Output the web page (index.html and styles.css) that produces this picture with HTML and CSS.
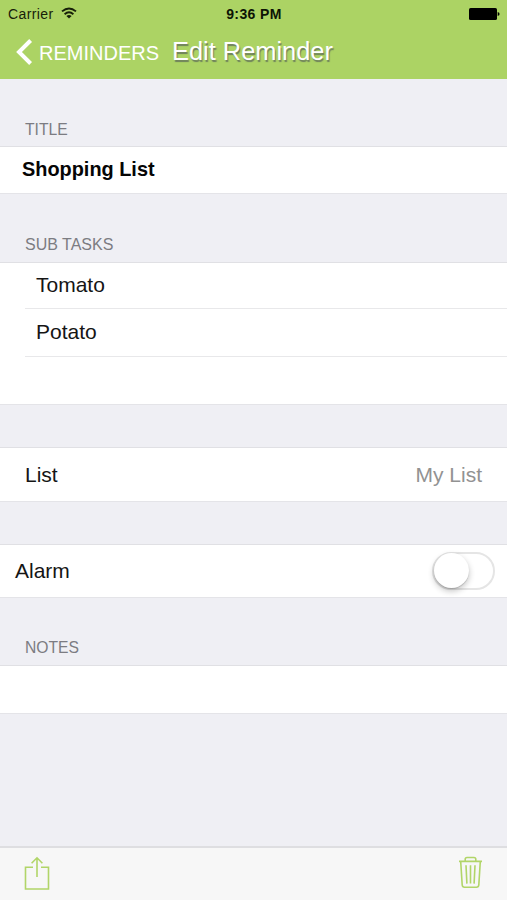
FILE: index.html
```html
<!DOCTYPE html>
<html lang="en">
<head>
<meta charset="utf-8">
<title>Edit Reminder</title>
<link rel="stylesheet" href="styles.css">
</head>
<body>
<div class="screen">
  <header class="header">
    <div class="status">
      <div class="carrier">
        <span>Carrier</span>
        <svg class="wifi" width="16" height="12" viewBox="0 0 16 12" fill="none" stroke="#172009" stroke-width="1.9"><path d="M1 4.4Q8-1.6 15 4.4M3.6 7.2Q8 3.5 12.4 7.2"/><path d="M5.4 8.9Q8 6.9 10.6 8.9L8 11.5Z" fill="#172009" stroke="none"/></svg>
      </div>
      <span class="time">9:36 PM</span>
      <svg class="battery" width="31" height="12" viewBox="0 0 31 12"><rect width="28" height="12" rx="1.6"/><path d="M28.7 4Q30.6 4.3 30.6 6T28.7 8Z"/></svg>
    </div>
    <nav class="nav">
      <a class="back">
        <svg width="17" height="26" viewBox="0 0 17 26" fill="none" stroke="#fff" stroke-width="4"><path d="M14.6 1.5 3 13 14.6 24.5"/></svg>
        <span class="back-label">REMINDERS</span>
      </a>
      <h1 class="title">Edit Reminder</h1>
    </nav>
  </header>
  <main class="form">
    <h2 class="label label-title">TITLE</h2>
    <div class="group row row-title">Shopping List</div>
    <h2 class="label label-tasks">SUB TASKS</h2>
    <div class="group tasks">
      <div class="task">Tomato</div>
      <div class="task">Potato</div>
      <div class="task"></div>
    </div>
    <div class="group row row-list"><span>List</span><span class="value">My List</span></div>
    <div class="group row row-alarm"><span>Alarm</span><span class="switch"><span class="knob"></span></span></div>
    <h2 class="label label-notes">NOTES</h2>
    <div class="group row-notes"></div>
  </main>
  <footer class="toolbar">
    <svg width="26" height="35" viewBox="0 0 26 35" fill="none" stroke="#b1d568" stroke-width="1.6"><path d="M9 11.2H1.5V33H24.5V11.2H17M13 21V2M7.6 7.2 13 1.8 18.4 7.2"/></svg>
    <svg width="25" height="33" viewBox="0 0 25 33" fill="none" stroke="#b1d568" stroke-width="1.6"><path d="M1 5.4H24M7.2 5V3.3Q7.2 1.5 9 1.5H16Q17.8 1.5 17.8 3.3V5M2.7 5.5 4.2 29Q4.4 31.2 6.5 31.2H18.5Q20.6 31.2 20.8 29L22.3 5.5M8 9.2 8.9 27.6M12.5 9.2V27.6M17 9.2 16.1 27.6"/></svg>
  </footer>
</div>
</body>
</html>
```
FILE: styles.css
```css
* { box-sizing: border-box; }
body {
  margin: 0;
  font-family: "Liberation Sans", Arial, sans-serif;
  color: #151515;
}
.screen {
  width: 507px;
  height: 900px;
  display: flex;
  flex-direction: column;
  background: #efeff4;
  overflow: hidden;
}
.header {
  height: 79px;
  flex: none;
  background: #acd364;
}
.status {
  height: 28px;
  padding: 0 7px 0 8px;
  display: grid;
  grid-template-columns: 1fr auto 1fr;
  align-items: center;
  font-size: 14px;
  line-height: 28px;
  color: #172009;
}
.carrier { display: flex; align-items: center; gap: 7px; letter-spacing: .4px; }
.wifi { margin-top: -3px; }
.time { font-weight: bold; font-size: 14px; letter-spacing: .4px; color: #0d1405; }
.battery { justify-self: end; fill: #000; margin-top: -1px; }
.nav {
  display: flex;
  align-items: center;
  height: 48px;
  padding-left: 16px;
  color: #fff;
}
.back { display: flex; align-items: center; }
.back-label { margin-left: 6px; width: 133px; font-size: 20px; line-height: 24px; padding-top: 1px; }
.title {
  margin: -2px 0 0;
  font-size: 25.4px;
  font-weight: normal;
  text-shadow: 1px 1.5px 1px rgba(90, 100, 90, .75);
}
.form { flex: 1; font-size: 21px; }
.label {
  margin: 0;
  padding-left: 25px;
  font-size: 16px;
  line-height: 18px;
  font-weight: normal;
  color: #7c7c82;
}
.label-title { padding-top: 42px; height: 67px; font-size: 15.7px; }
.label-tasks { padding-top: 42px; height: 68px; }
.label-notes { padding-top: 41px; height: 67px; font-size: 15.7px; }
.group {
  background: #fff;
  border-top: 1px solid #e0e0e4;
  border-bottom: 1px solid #e4e4e8;
}
.row { display: flex; align-items: center; justify-content: space-between; }
.row-title {
  height: 48px;
  padding: 0 22px 2px;
  font-size: 19.9px;
  font-weight: bold;
  color: #050505;
}
.tasks { height: 143px; padding-left: 25px; }
.task {
  height: 48px;
  padding-left: 11px;
  line-height: 45px;
  border-bottom: 1px solid #e8e8ea;
}
.task:first-child { height: 46px; line-height: 44px; }
.task:last-child { height: 47px; border-bottom: 0; }
.row-list { height: 55px; margin-top: 42px; padding: 1px 25px 0; }
.value { color: #929292; }
.row-alarm { height: 54px; margin-top: 42px; padding: 0 12px 0 15px; }
.switch {
  width: 63px;
  height: 38px;
  border: 2px solid #e5e5e5;
  border-radius: 19px;
  margin-top: -1px;
}
.knob {
  display: block;
  width: 35px;
  height: 35px;
  margin: -1px 0 0 0;
  border-radius: 50%;
  background: #fff;
  box-shadow: 0 3px 6px rgba(0, 0, 0, .24), 0 1px 1px rgba(0, 0, 0, .15);
}
.row-notes { height: 49px; }
.toolbar {
  height: 54px;
  flex: none;
  display: flex;
  justify-content: space-between;
  align-items: flex-start;
  padding: 8px 24px 0;
  background: #f7f7f7;
  border-top: 2px solid #dedee1;
}
```
